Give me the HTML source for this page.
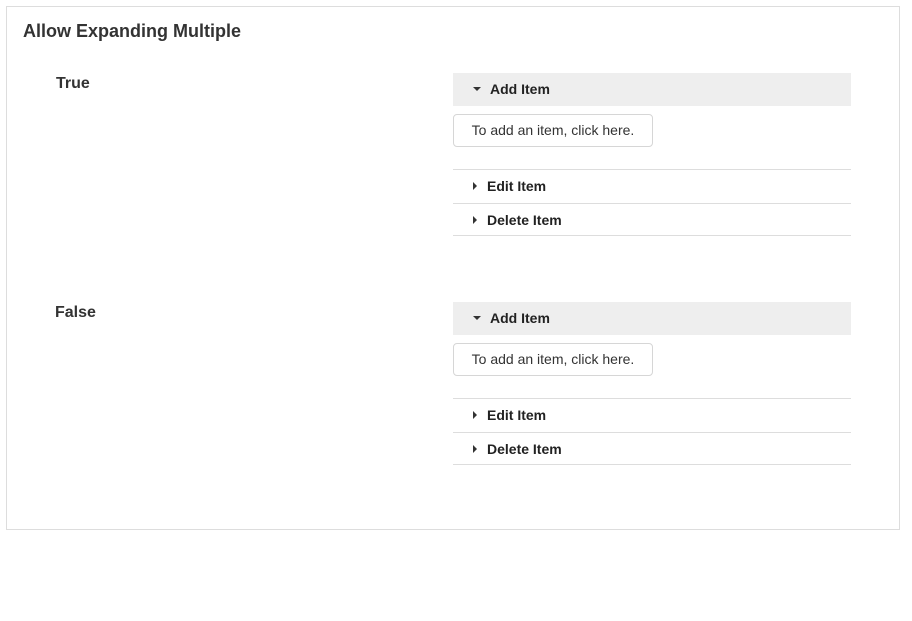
<!DOCTYPE html>
<html><head><style>
body{margin:0;background:#fff;font-family:"Liberation Sans",Arial,sans-serif;color:#333;}
.box{position:absolute;left:6px;top:6px;width:892px;height:522px;border:1px solid #ddd;}
.t{position:absolute;font-weight:bold;}
.hdr{position:absolute;left:453px;width:398px;height:33px;background:#eee;}
.btn{position:absolute;left:453px;width:198px;height:31px;border:1px solid #d6d6d6;border-radius:4px;font-size:14px;line-height:31px;text-align:center;}
.ln{position:absolute;left:453px;width:398px;height:1px;background:#ddd;}
.lbl{position:absolute;font-size:14px;font-weight:bold;color:#222;}
.dn{position:absolute;width:0;height:0;border-left:4px solid transparent;border-right:4px solid transparent;border-top:4px solid #333;}
.rt{position:absolute;width:0;height:0;border-top:4px solid transparent;border-bottom:4px solid transparent;border-left:4px solid #333;}
</style></head><body>
<div class="box"></div>
<div class="t" style="left:23px;top:21px;font-size:18px;">Allow Expanding Multiple</div>

<div class="t" style="left:56px;top:75px;font-size:16px;">True</div>
<div class="hdr" style="top:73px"></div>
<div class="dn" style="left:473px;top:87px"></div>
<div class="lbl" style="left:490px;top:81px">Add Item</div>
<div class="btn" style="top:114px">To add an item, click here.</div>
<div class="ln" style="top:169px"></div>
<div class="rt" style="left:473px;top:182px"></div>
<div class="lbl" style="left:487px;top:178px">Edit Item</div>
<div class="ln" style="top:203px"></div>
<div class="rt" style="left:473px;top:216px"></div>
<div class="lbl" style="left:487px;top:212px">Delete Item</div>
<div class="ln" style="top:235px"></div>

<div class="t" style="left:55px;top:304px;font-size:16px;">False</div>
<div class="hdr" style="top:302px"></div>
<div class="dn" style="left:473px;top:316px"></div>
<div class="lbl" style="left:490px;top:310px">Add Item</div>
<div class="btn" style="top:343px">To add an item, click here.</div>
<div class="ln" style="top:398px"></div>
<div class="rt" style="left:473px;top:411px"></div>
<div class="lbl" style="left:487px;top:407px">Edit Item</div>
<div class="ln" style="top:432px"></div>
<div class="rt" style="left:473px;top:445px"></div>
<div class="lbl" style="left:487px;top:441px">Delete Item</div>
<div class="ln" style="top:464px"></div>
</body></html>
